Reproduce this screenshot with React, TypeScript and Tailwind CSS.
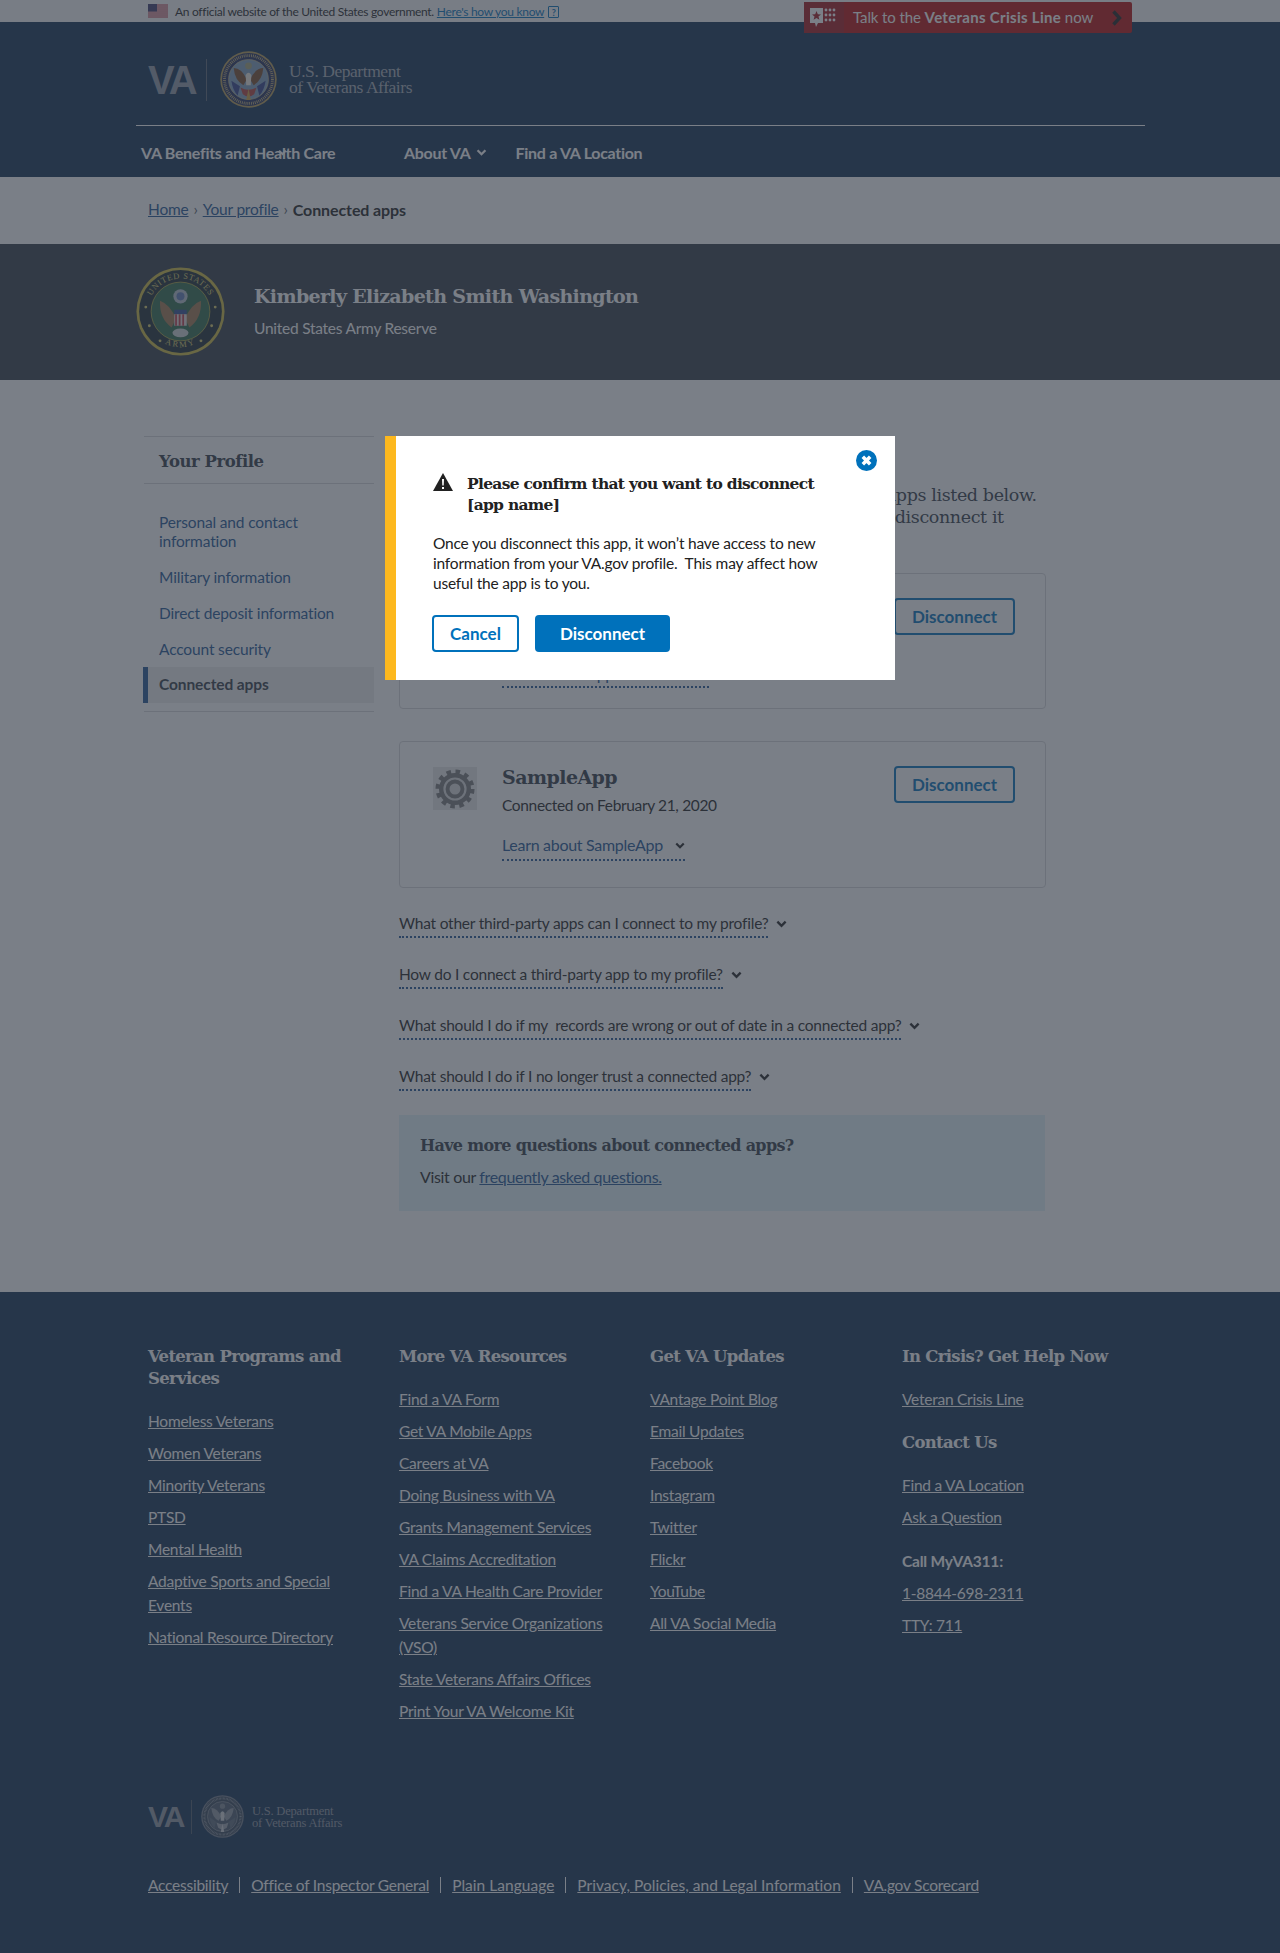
import React from "react";

const Chevron = ({ className = "" }: { className?: string }) => (
  <svg viewBox="0 0 12 8" className={className} fill="none" stroke="currentColor" strokeWidth="2.6" aria-hidden="true">
    <path d="M1.500 1.500 6 6l4.500-4.500" />
  </svg>
);

const VASeal = ({ mono = false, className = "" }: { mono?: boolean; className?: string }) => (
  <svg viewBox="0 0 100 100" className={className} aria-hidden="true">
    <circle cx="50" cy="50" r="49.500" fill={mono ? "#6f7a89" : "#b59a55"} />
    <circle cx="50" cy="50" r="46.500" fill={mono ? "#364659" : "#24305c"} />
    <circle cx="50" cy="50" r="42" fill="none" stroke={mono ? "#8a93a0" : "#c4b07a"} strokeWidth="5" strokeDasharray="1.500 1.800" />
    <circle cx="50" cy="50" r="35" fill={mono ? "#4c5b6d" : "#7f9fbd"} stroke={mono ? "#a0a7b2" : "#c9b98a"} strokeWidth="1.200" />
    <circle cx="50" cy="26" r="6" fill={mono ? "#7d8793" : "#a3a37a"} />
    <path d="M24 30 Q38 30 47 50 L41 60 Q26 52 24 30Z" fill={mono ? "#8c95a2" : "#7a4a2a"} />
    <path d="M76 30 Q62 30 53 50 L59 60 Q74 52 76 30Z" fill={mono ? "#8c95a2" : "#7a4a2a"} />
    <path d="M45 42 Q50 34 55 42 L54 60 H46Z" fill={mono ? "#d0d3d8" : "#efeadf"} />
    <path d="M20 52 L35 62 L31 78 Q22 68 20 52Z M80 52 L65 62 L69 78 Q78 68 80 52Z" fill={mono ? "#5d6b7d" : "#33408a"} />
    <path d="M36 64 Q50 72 64 64 L60 76 Q50 84 40 76Z" fill={mono ? "#9aa2ad" : "#b5413a"} />
    <path d="M50 66 L46 86 H54Z" fill={mono ? "#c9ccd2" : "#cf9f3e"} />
  </svg>
);

const VALogo = ({ small = false }: { small?: boolean }) =>
  small ? (
    <div className="flex h-[43px] items-center">
      <span className="w-[35px] font-['Liberation_Sans',sans-serif] text-[30px] leading-none font-bold tracking-[-2px] text-[#8c95a1]">VA</span>
      <span className="mx-[8px] h-[34px] w-px bg-[#4a596b]" />
      <VASeal mono className="ml-[1px] h-[43px] w-[43px]" />
      <span className="ml-[8px] font-['Liberation_Serif',serif] text-[12.500px] leading-[12px] tracking-[-0.2px] text-[#8c95a1]">
        U.S. Department
        <br />
        of Veterans Affairs
      </span>
    </div>
  ) : (
    <div className="flex h-[57px] items-center">
      <span className="w-[48px] font-['Liberation_Sans',sans-serif] text-[40px] leading-none font-bold tracking-[-3px] text-[#8f99a6]">VA</span>
      <span className="ml-[10px] h-[42px] w-px bg-[#5a6676]" />
      <VASeal className="ml-[13px] h-[57px] w-[57px]" />
      <span className="mb-[2px] ml-[12px] font-['Liberation_Serif',serif] text-[17.500px] leading-[16px] tracking-[-0.45px] text-[#a4abb5]">
        U.S. Department
        <br />
        of Veterans Affairs
      </span>
    </div>
  );

const ArmySeal = () => (
  <svg viewBox="0 0 100 100" className="mb-[2px] h-[89px] w-[89px] shrink-0" aria-hidden="true">
    <defs>
      <path id="army-top" d="M13 50 A37 37 0 0 1 87 50" />
      <path id="army-bottom" d="M10 50 A40 40 0 0 0 90 50" />
    </defs>
    <circle cx="50" cy="50" r="49.500" fill="#cdbb3f" />
    <circle cx="50" cy="50" r="46.500" fill="#1c2a33" />
    <circle cx="50" cy="50" r="33" fill="#2f6a4c" stroke="#cdbb3f" strokeWidth="0.800" />
    <text fontSize="9.500" fill="#d8cc6a" fontFamily="Liberation Serif, serif" letterSpacing="0.700">
      <textPath href="#army-top" startOffset="50%" textAnchor="middle">UNITED STATES</textPath>
    </text>
    <text fontSize="9.500" fill="#d8cc6a" fontFamily="Liberation Serif, serif" letterSpacing="2">
      <textPath href="#army-bottom" startOffset="50%" textAnchor="middle">ARMY</textPath>
    </text>
    <path d="M27 38 Q38 42 45 58 L40 68 Q26 58 27 38Z M73 38 Q62 42 55 58 L60 68 Q74 58 73 38Z" fill="#a0764d" />
    <circle cx="50" cy="33" r="8" fill="#b5c0cc" />
    <circle cx="50" cy="33" r="4.500" fill="#5f7db8" />
    <rect x="43" y="48" width="14" height="5" fill="#334e96" />
    <rect x="43" y="53" width="14" height="13" fill="#e4d8d8" />
    <path d="M45 53v13M49 53v13M53 53v13" stroke="#c03a48" strokeWidth="2" />
    <ellipse cx="50" cy="74" rx="9" ry="5" fill="#cfd3d3" />
    <g fill="#d8cc6a">
      <circle cx="11" cy="45" r="1.600" /><circle cx="15" cy="66" r="1.600" /><circle cx="89" cy="45" r="1.600" /><circle cx="85" cy="66" r="1.600" /><circle cx="27" cy="83" r="1.600" /><circle cx="73" cy="83" r="1.600" />
    </g>
  </svg>
);

const Gear = () => (
  <div className="flex h-[43px] w-[44px] items-center justify-center bg-[#e7e7e7]">
    <svg viewBox="0 0 44 44" className="h-[44px] w-[44px]" aria-hidden="true">
      <circle cx="22" cy="22" r="17" fill="none" stroke="#787878" strokeWidth="5" strokeDasharray="4.450 4.450" />
      <circle cx="22" cy="22" r="16" fill="#787878" />
      <circle cx="22" cy="22" r="10.500" fill="none" stroke="#d9d9d9" strokeWidth="2.200" />
      <circle cx="22" cy="22" r="5.500" fill="#d9d9d9" />
    </svg>
  </div>
);

const DisconnectOutline = () => (
  <span className="flex h-[37px] w-[121px] items-center justify-center rounded-[4px] border-2 border-[#0071bb] text-[17px] font-bold text-[#0071bb]">Disconnect</span>
);

const Faq = ({ text }: { text: string }) => (
  <div className="flex h-[51px] items-start pt-[7px]">
    <span className="flex h-[26px] items-center border-b-2 border-dotted border-[#205493] text-[15.500px] tracking-[-0.22px] whitespace-pre text-[#212121]">{text}</span>
    <Chevron className="mt-[8px] ml-[8px] h-[8px] w-[11px] text-[#212121]" />
  </div>
);

const FLink = ({ children, wide = false }: { children: React.ReactNode; wide?: boolean }) => (
  <a className={`block text-[15.500px] leading-[24px] text-white underline ${wide ? "tracking-[0.03px]" : "tracking-[-0.25px]"}`}>{children}</a>
);

const FHead = ({ children, className = "" }: { children: React.ReactNode; className?: string }) => (
  <h4 className={`font-['DejaVu_Serif',serif] text-[16.500px] leading-[22px] font-bold tracking-[-0.7px] text-white ${className}`}>{children}</h4>
);

const SideLink = ({ children }: { children: React.ReactNode }) => (
  <a className="block pl-[15px] text-[15.500px] leading-[19px] tracking-[-0.15px] text-[#205493]">{children}</a>
);

const BottomSep = () => <span className="mx-[11px] h-[16px] w-px bg-white" />;

export default function App() {
  return (
    <div className="relative min-h-[1953px] overflow-hidden bg-white font-['Lato',sans-serif] text-[#212121]">
      {/* gov banner */}
      <div className="flex h-[22px] items-center bg-[#f9f9f9] pl-[148px]">
        <svg viewBox="0 0 20 14" className="h-[14px] w-[20px]" aria-hidden="true">
          <rect width="20" height="14" fill="#fff" />
          <path d="M0 1h20M0 3h20M0 5h20M0 7h20M0 9h20M0 11h20M0 13h20" stroke="#b22234" strokeWidth="1" />
          <rect width="9" height="7.500" fill="#3c3b6e" />
        </svg>
        <span className="mt-[1px] ml-[7px] text-[12px] tracking-[-0.3px]">An official website of the United States government.</span>
        <a className="mt-[1px] ml-[3px] text-[12px] tracking-[-0.3px] text-[#0071bb] underline">Here's how you know</a>
        <span className="mt-[2px] ml-[4px] flex h-[12px] w-[11px] items-center justify-center rounded-[1px] border border-[#0071bb] text-[9px] leading-none font-bold text-[#0071bb]">?</span>
      </div>

      {/* header */}
      <header className="relative h-[155px] bg-[#112e51]">
        <div className="px-[148px] pt-[29px]">
          <VALogo />
        </div>
        <div className="mx-[136px] mt-[17px] h-px w-[1009px] bg-white" />
        <nav className="flex h-[53px] items-center pl-[141px] text-[16px] font-bold tracking-[-0.3px] text-white">
          <span className="relative w-[263px]">
            VA Benefits and Health Care
            <Chevron className="absolute top-[8px] left-[137px] h-[7px] w-[9px]" />
          </span>
          <span>About VA</span>
          <Chevron className="ml-[5px] h-[7px] w-[11px]" />
          <span className="ml-[29px]">Find a VA Location</span>
        </nav>
        {/* crisis line */}
        <div className="absolute top-[-20px] left-[804px] flex h-[31px] w-[328px] items-center rounded-[2px] bg-[#b70e0c] text-white">
          <div className="flex h-full w-[40px] items-center justify-center bg-[#a3141c]">
            <svg viewBox="0 0 30 24" className="h-[24px] w-[30px]" aria-hidden="true">
              <path d="M1 2h13v15H9l-2 4-1-4H1Z" fill="#fff" />
              <path d="m7.500 5 1.300 3.200 3.200.2-2.500 2.100.9 3.200-2.900-1.800-2.900 1.800.9-3.200-2.500-2.100 3.200-.2Z" fill="#a3141c" />
              <g fill="#fff">
                <circle cx="17" cy="4" r="1.400" /><circle cx="21" cy="4" r="1.400" /><circle cx="25" cy="4" r="1.400" />
                <circle cx="17" cy="9" r="1.400" /><circle cx="21" cy="9" r="1.400" /><circle cx="25" cy="9" r="1.400" />
                <circle cx="17" cy="14" r="1.400" /><circle cx="21" cy="14" r="1.400" /><circle cx="25" cy="14" r="1.400" />
              </g>
            </svg>
          </div>
          <span className="ml-[9px] w-[259px] text-[15px] tracking-[-0.1px]">
            Talk to the <b className="tracking-[0.3px]">Veterans Crisis Line</b> now
          </span>
          <svg viewBox="0 0 10 16" className="h-[16px] w-[10px]" fill="none" stroke="#1b1b1b" strokeWidth="3.400" aria-hidden="true">
            <path d="m1.500 1.500 6 6.500-6 6.500" />
          </svg>
        </div>
      </header>

      {/* breadcrumb */}
      <div className="flex h-[67px] items-center pb-[2px] pl-[148px] text-[15.500px] tracking-[-0.2px]">
        <a className="text-[#205493] underline">Home</a>
        <span className="mx-[5px] text-[#5b616b]">›</span>
        <a className="text-[#205493] underline">Your profile</a>
        <span className="mx-[5px] text-[#5b616b]">›</span>
        <b className="text-[16px] tracking-[-0.1px]">Connected apps</b>
      </div>

      {/* hero */}
      <div className="flex h-[136px] items-center bg-[#323a45] pl-[136px]">
        <ArmySeal />
        <div className="ml-[29px] pb-[3px]">
          <h2 className="font-['DejaVu_Serif',serif] text-[19px] leading-[26px] font-bold tracking-[-0.65px] text-white">Kimberly Elizabeth Smith Washington</h2>
          <p className="mt-[9px] text-[15.500px] leading-[20px] tracking-[-0.25px] text-white">United States Army Reserve</p>
        </div>
      </div>

      {/* main */}
      <main className="flex h-[912px] pt-[56px] pl-[144px]">
        <aside className="w-[230px] shrink-0">
          <div className="flex h-[48px] items-center border-y border-[#d6d7d9] pt-[4px] pl-[15px] font-['DejaVu_Serif',serif] text-[16.500px] font-bold tracking-[-0.45px] text-[#323a45]">Your Profile</div>
          <div className="flex flex-col gap-[17px] pt-[29px]">
            <SideLink>Personal and contact<br />information</SideLink>
            <SideLink>Military information</SideLink>
            <SideLink>Direct deposit information</SideLink>
            <SideLink>Account security</SideLink>
          </div>
          <div className="mt-[8px] -ml-px flex h-[36px] w-[231px] items-center border-l-[5px] border-[#205493] bg-[#eeeeee] pl-[11px] text-[15.500px] font-bold tracking-[-0.1px] text-[#323a45]">Connected apps</div>
          <div className="mt-[8px] border-t border-[#d6d7d9]" />
        </aside>

        <section className="ml-[25px] w-[647px]">
          <p className="h-[137px] pt-[48px] font-['DejaVu_Serif',serif] text-[17.500px] leading-[22px] tracking-[-0.39px] whitespace-nowrap text-[#323a45]">
            Here are third-party apps you've connected. You can see apps listed below.
            <br />
            If you no longer want to share data with any app, you can disconnect it
          </p>

          <div className="relative h-[136px] rounded-[4px] border border-[#d6d7d9]">
            <div className="absolute top-[24px] right-[30px]"><DisconnectOutline /></div>
            <div className="absolute top-[22px] left-[33px]"><Gear /></div>
            <div className="ml-[102px] pt-[78px]">
              <span className="inline-block h-[36px] w-[207px] border-b-2 border-dotted border-[#205493] pt-[10px] text-[16px] tracking-[-0.25px] text-[#205493]">Learn about Apple Health</span>
            </div>
          </div>

          <div className="relative mt-[32px] h-[147px] rounded-[4px] border border-[#d6d7d9]">
            <div className="absolute top-[24px] right-[30px]"><DisconnectOutline /></div>
            <div className="absolute top-[25px] left-[33px]"><Gear /></div>
            <div className="ml-[102px] pt-[21px]">
              <h3 className="font-['DejaVu_Serif',serif] text-[19px] leading-[28px] font-bold tracking-[-0.55px] text-[#323a45]">SampleApp</h3>
              <p className="mt-[2px] text-[15.500px] leading-[24px] tracking-[-0.35px]">Connected on February 21, 2020</p>
              <div className="mt-[16px] flex h-[28px] w-[183px] items-start border-b-2 border-dotted border-[#205493] text-[16px] leading-[24px] tracking-[-0.3px] text-[#205493]">
                Learn about SampleApp
                <Chevron className="mt-[9px] mr-0 ml-auto h-[7px] w-[10px] text-[#212121]" />
              </div>
            </div>
          </div>

          <div className="pt-[17px]">
            <Faq text="What other third-party apps can I connect to my profile?" />
            <Faq text="How do I connect a third-party app to my profile?" />
            <Faq text="What should I do if my  records are wrong or out of date in a connected app?" />
            <Faq text="What should I do if I no longer trust a connected app?" />
          </div>

          <div className="mt-[6px] h-[96px] w-[646px] bg-[#e1f3f8] pt-[19px] pl-[21px]">
            <h3 className="font-['DejaVu_Serif',serif] text-[16px] leading-[24px] font-bold tracking-[-0.66px] text-[#323a45]">Have more questions about connected apps?</h3>
            <p className="mt-[7px] text-[16px] leading-[24px] tracking-[-0.35px]">
              Visit our <a className="text-[#205493] underline">frequently asked questions.</a>
            </p>
          </div>
        </section>
      </main>

      {/* footer */}
      <footer className="h-[661px] bg-[#112e51] pt-[54px] pl-[148px]">
        <div className="grid h-[449px] grid-cols-[251px_251px_252px_230px]">
          <div>
            <FHead>Veteran Programs and<br />Services</FHead>
            <div className="mt-[19px] flex flex-col gap-[8px]">
              <FLink>Homeless Veterans</FLink>
              <FLink>Women Veterans</FLink>
              <FLink>Minority Veterans</FLink>
              <FLink>PTSD</FLink>
              <FLink>Mental Health</FLink>
              <FLink>Adaptive Sports and Special<br />Events</FLink>
              <FLink>National Resource Directory</FLink>
            </div>
          </div>
          <div>
            <FHead>More VA Resources</FHead>
            <div className="mt-[19px] flex flex-col gap-[8px]">
              <FLink>Find a VA Form</FLink>
              <FLink>Get VA Mobile Apps</FLink>
              <FLink>Careers at VA</FLink>
              <FLink>Doing Business with VA</FLink>
              <FLink>Grants Management Services</FLink>
              <FLink>VA Claims Accreditation</FLink>
              <FLink>Find a VA Health Care Provider</FLink>
              <FLink>Veterans Service Organizations<br />(VSO)</FLink>
              <FLink>State Veterans Affairs Offices</FLink>
              <FLink>Print Your VA Welcome Kit</FLink>
            </div>
          </div>
          <div>
            <FHead>Get VA Updates</FHead>
            <div className="mt-[19px] flex flex-col gap-[8px]">
              <FLink>VAntage Point Blog</FLink>
              <FLink>Email Updates</FLink>
              <FLink>Facebook</FLink>
              <FLink>Instagram</FLink>
              <FLink>Twitter</FLink>
              <FLink>Flickr</FLink>
              <FLink>YouTube</FLink>
              <FLink>All VA Social Media</FLink>
            </div>
          </div>
          <div>
            <FHead>In Crisis? Get Help Now</FHead>
            <div className="mt-[19px]"><FLink>Veteran Crisis Line</FLink></div>
            <FHead className="mt-[21px]">Contact Us</FHead>
            <div className="mt-[19px] flex flex-col gap-[8px]">
              <FLink>Find a VA Location</FLink>
              <FLink>Ask a Question</FLink>
            </div>
            <p className="mt-[20px] text-[15.500px] leading-[24px] font-bold tracking-[-0.2px] text-white">Call MyVA311:</p>
            <div className="mt-[8px] flex flex-col gap-[8px]">
              <FLink>1-8844-698-2311</FLink>
              <FLink>TTY: 711</FLink>
            </div>
          </div>
        </div>
        <VALogo small />
        <div className="mt-[35px] flex h-[24px] items-center">
          <FLink>Accessibility</FLink><BottomSep />
          <FLink>Office of Inspector General</FLink><BottomSep />
          <FLink wide>Plain Language</FLink><BottomSep />
          <FLink wide>Privacy, Policies, and Legal Information</FLink><BottomSep />
          <FLink>VA.gov Scorecard</FLink>
        </div>
      </footer>

      {/* overlay */}
      <div className="absolute inset-0 bg-[rgba(50,59,70,0.65)]" />

      {/* modal */}
      <div className="absolute top-[436px] left-[385px] h-[244px] w-[510px] border-l-[11px] border-[#fdb81e] bg-white">
        <svg viewBox="0 0 20 20" className="absolute top-[14px] right-[18px] h-[21px] w-[21px]" aria-hidden="true">
          <circle cx="10" cy="10" r="10" fill="#0071bb" />
          <path d="m6.500 6.500 7 7m0-7-7 7" stroke="#fff" strokeWidth="3.400" />
        </svg>
        <div className="pt-[37px] pl-[37px]">
          <div className="flex">
            <svg viewBox="0 0 20 18" className="h-[18px] w-[20px] shrink-0" aria-hidden="true">
              <path d="M10 0 20 18H0Z" fill="#212121" />
              <path d="M9 6h2l-.3 6.500H9.300ZM9 14h2v2H9Z" fill="#fff" />
            </svg>
            <h3 className="ml-[14px] font-['DejaVu_Serif',serif] text-[15.500px] leading-[21px] font-bold tracking-[-0.7px]">
              Please confirm that you want to disconnect
              <br />
              [app name]
            </h3>
          </div>
          <p className="mt-[18px] text-[15.500px] leading-[20px] tracking-[-0.2px]">
            Once you disconnect this app, it won’t have access to new
            <br />
            information from your VA.gov profile.&nbsp; This may affect how
            <br />
            useful the app is to you.
          </p>
          <div className="mt-[22px] -ml-px flex gap-[16px]">
            <span className="flex h-[37px] w-[87px] items-center justify-center rounded-[4px] border-2 border-[#0071bb] text-[17px] font-bold text-[#0071bb]">Cancel</span>
            <span className="flex h-[37px] w-[135px] items-center justify-center rounded-[4px] bg-[#0071bb] text-[17px] font-bold text-white">Disconnect</span>
          </div>
        </div>
      </div>
    </div>
  );
}
